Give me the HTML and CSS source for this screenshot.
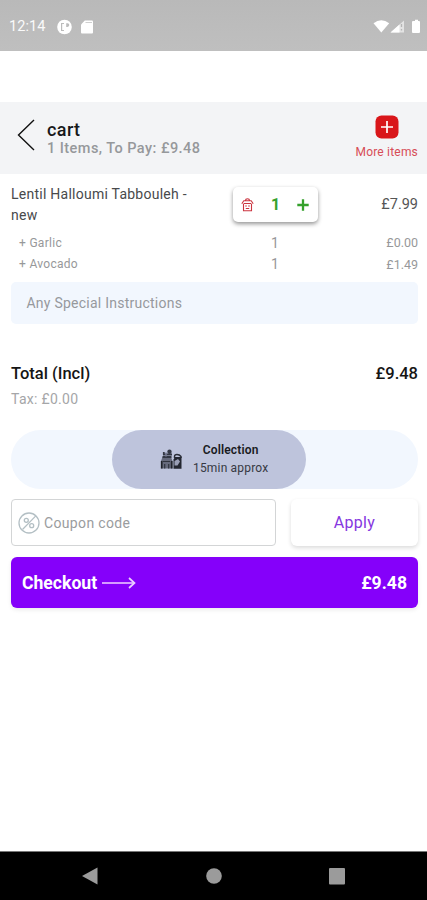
FILE: index.html
```html
<!DOCTYPE html>
<html lang="en">
<head>
<meta charset="utf-8">
<title>Cart</title>
<link rel="stylesheet" href="styles.css">
</head>
<body>
<div class="screen">
  <div class="status">
    <span class="clock">12:14</span>
    <svg class="app-badge" width="15" height="16" viewBox="0 0 15 16"><circle cx="7.5" cy="8" r="7.3" fill="#fff"/><path d="M7 4.500H4.600v7H7" fill="none" stroke="#bcbcbc" stroke-width="1.200"/><path d="M9.200 4.300h1.300a1.700 1.700 0 0 1 0 3.600H9.200z" fill="#bcbcbc"/></svg>
    <svg class="sd-card" width="12" height="14" viewBox="0 0 12 14"><path d="M3.8.5H11q1 0 1 1v11q0 1-1 1H1q-1 0-1-1V4.5z" fill="#fff"/><path d="M4.500 2.500h6.500" stroke="#cfcfcf" stroke-width="1"/></svg>
    <svg class="signals" width="48" height="16" viewBox="0 0 48 16"><path d="M.5 4.300Q8.300-1.800 16.200 4.300L8.300 13.600z" fill="#fff"/><path d="M31 1.500V13.500H17.500z" fill="#e3e3e3"/><path d="M26.500 5.500v8h-9z" fill="#fff"/><path d="M28.500 5v3m0 2v1.500" stroke="#b5b5b5" stroke-width="1.300"/><path d="M40 2h2V.7h3V2h1q1 0 1 1v10q0 1-1 1h-6q-1 0-1-1V3q0-1 1-1z" fill="#fff"/></svg>
  </div>

  <header class="header">
    <svg class="back" width="18" height="32" viewBox="0 0 18 32"><path d="M17 1L1.500 16L17 31" fill="none" stroke="#111" stroke-width="1.400"/></svg>
    <div class="heading">
      <div class="title">cart</div>
      <div class="summary">1 Items, To Pay: £9.48</div>
    </div>
    <div class="more">
      <svg width="24" height="24" viewBox="0 0 24 24"><rect x=".5" y=".5" width="23" height="23" rx="6" fill="#d9161a"/><path d="M12 6v12M6 12h12" stroke="#fff" stroke-width="1.700"/></svg>
      <span class="more-label">More items</span>
    </div>
  </header>

  <main class="cart">
    <div class="item">
      <div class="name">Lentil Halloumi Tabbouleh -<br>new</div>
      <div class="stepper">
        <svg width="13" height="14" viewBox="0 0 13 14"><path d="M.8 5.800l2-3h7.400l2 3M4.300 2.800q.2-2 2.200-2t2.200 2M2.600 5.500h7.800M2.500 6v6.800h8V6M5 7.300v1.400M8 7.300v1.400M4.800 10.500h3.400" fill="none" stroke="#cb3540" stroke-width="1.100"/></svg>
        <span class="qty">1</span>
        <svg width="12" height="12" viewBox="0 0 12 12"><path d="M6 .3v11.400M.3 6h11.400" stroke="#35a12c" stroke-width="2.300"/></svg>
      </div>
      <div class="price">£7.99</div>
    </div>
    <div class="extra"><span class="extra-name">+ Garlic</span><span class="extra-qty">1</span><span class="extra-price">£0.00</span></div>
    <div class="extra"><span class="extra-name">+ Avocado</span><span class="extra-qty">1</span><span class="extra-price">£1.49</span></div>
    <div class="note">Any Special Instructions</div>

    <div class="total"><span class="total-label">Total (Incl)</span><span class="total-price">£9.48</span></div>
    <div class="tax">Tax: £0.00</div>

    <div class="method">
      <div class="method-option">
        <svg width="23" height="21" viewBox="0 0 23 21"><path d="M2.500 8h8.500l1.500 4v7.500H1V12z" fill="#666a7c"/><path d="M3.800 6V3M3 5.500h9M2.500 8h9" stroke="#343844" stroke-width="1.800"/><circle cx="9.500" cy="2.800" r="2.200" fill="#343844"/><path d="M6 3.500v4" stroke="#787d94" stroke-width="1.500"/><path d="M1.700 12v7.500M11.700 12v7.500" stroke="#20232b" stroke-width="1.700"/><path d="M4.700 15v4.500M8.700 15v4.500M3 12.500h7" stroke="#30333d" stroke-width="1.200"/><path d="M13.500 10.500L15 8h6.500v11.800h-8z" fill="#232630"/><path d="M14.500 9V7.500q0-2 2.500-2t4 2V9" fill="none" stroke="#292c36" stroke-width="1.400"/><path d="M14.500 12l3.500-2 2 2.500-2.500 4h-3z" fill="#999eb5"/></svg>
        <div class="method-text"><div class="method-name">Collection</div><div class="method-time">15min approx</div></div>
      </div>
    </div>

    <div class="coupon-row">
      <div class="coupon">
        <svg width="22" height="22" viewBox="0 0 22 22" fill="none" stroke="#b3bfc4"><circle cx="11" cy="11" r="10" stroke-width="1.300"/><path d="M17.800 3.800L4.500 17.500" stroke-width="1.200"/><circle cx="8.300" cy="8.300" r="2" stroke-width="1.300"/><circle cx="13.700" cy="13.700" r="2" stroke-width="1.300"/></svg>
        <span class="coupon-label">Coupon code</span>
      </div>
      <div class="apply"><span class="apply-label">Apply</span></div>
    </div>

    <div class="checkout">
      <span class="checkout-label">Checkout</span>
      <svg width="34" height="14" viewBox="0 0 34 14"><path d="M0 7h32" stroke="#d59cff" stroke-width="2"/><path d="M27 2l5.500 5L27 12" fill="none" stroke="#eacfff" stroke-width="1.700"/></svg>
      <span class="checkout-price">£9.48</span>
    </div>
  </main>

  <nav class="nav">
    <svg width="16" height="18" viewBox="0 0 16 18"><path d="M0 9L15.500.500v17z" fill="#9b9b9b"/></svg>
    <svg width="16" height="16" viewBox="0 0 16 16"><circle cx="8" cy="8" r="7.800" fill="#9b9b9b"/></svg>
    <svg width="16" height="17" viewBox="0 0 16 17"><rect width="16" height="16.500" rx="1" fill="#9b9b9b"/></svg>
  </nav>
</div>
</body>
</html>
```
FILE: styles.css
```css
* { box-sizing: border-box; }
body { margin: 0; background: #fff; font-family: Roboto, "Liberation Sans", sans-serif; color: #222; }
svg { display: block; flex: none; }
span, .name, .title, .summary { white-space: nowrap; }
.screen { width: 427px; height: 900px; display: flex; flex-direction: column; overflow: hidden; }

.status { height: 51px; margin-bottom: 51px; padding: 2px 7px 0 9px; display: flex; align-items: center; flex: none; background: linear-gradient(#b9b9b9, #bfbfbf); }
.clock { width: 48px; font-size: 14.5px; letter-spacing: .1px; color: #fafafa; }
.sd-card { margin-left: 9px; }
.signals { margin-left: auto; margin-right: -1px; }

.header { height: 72px; flex: none; display: flex; align-items: center; padding: 0 9px 0 17px; background: #f3f4f6; }
.back { margin-top: -6px; }
.heading { margin: 1px 0 0 12px; }
.title { font-size: 18px; line-height: 19px; font-weight: 500; letter-spacing: .4px; color: #17181a; }
.summary { font-size: 14.5px; line-height: 19px; font-weight: 500; letter-spacing: .45px; color: #96989b; }
.more { margin-left: auto; display: flex; flex-direction: column; align-items: center; gap: 6px; padding-bottom: 2px; }
.more-label { font-size: 12px; line-height: 15px; letter-spacing: .2px; color: #d74d56; }

.cart { flex: 1; padding: 10px 9px 0 11px; }
.item { display: flex; height: 48px; }
.name { width: 222px; font-size: 14px; line-height: 20.5px; letter-spacing: .25px; color: #48494b; }
.stepper { width: 85px; height: 35px; margin-top: 3px; padding: 0 9px 0 8px; display: flex; align-items: center; justify-content: space-between; background: #fff; border-radius: 5px; box-shadow: 0 2px 4px rgba(0,0,0,.42); }
.qty { font-size: 16px; font-weight: 700; color: #35a12c; }
.price { margin: 12px 0 0 auto; font-size: 14.5px; line-height: 18px; color: #555; }
.extra { display: grid; grid-template-columns: 241px 30px 1fr; height: 21.5px; align-items: center; padding-left: 8px; font-size: 12.5px; color: #97989a; }
.extra-name { font-size: 12px; letter-spacing: .3px; }
.extra-qty { text-align: center; font-size: 14px; }
.extra-price { text-align: right; }
.note { height: 42px; margin: 7px 0 0; padding-left: 15.5px; padding-bottom: 1px; display: flex; align-items: center; background: #f2f7fe; border-radius: 5px; font-size: 14px; letter-spacing: .24px; color: #96999d; }
.total { margin-top: 40px; display: flex; justify-content: space-between; font-size: 16.5px; line-height: 20px; font-weight: 500; color: #151515; }
.tax { margin-top: 6px; font-size: 14px; line-height: 18px; letter-spacing: .3px; color: #a5a6a8; }
.method { height: 59px; margin-top: 22px; display: flex; justify-content: center; background: #f2f7fe; border-radius: 30px; }
.method-option { width: 194px; margin-right: 11px; display: flex; align-items: center; padding-left: 48px; gap: 10px; background: #bec4dc; border-radius: 30px; }
.method-text { padding-bottom: 1px; text-align: center; white-space: nowrap; font-size: 12px; line-height: 18px; letter-spacing: .18px; }
.method-name { font-weight: 600; color: #191b22; }
.method-time { color: #363943; }
.coupon-row { display: grid; grid-template-columns: 265px 1fr; column-gap: 15px; height: 47px; margin-top: 10px; }
.coupon { display: flex; align-items: center; gap: 4px; padding-left: 6px; border: 1px solid #d3d5d6; border-radius: 4px; font-size: 14px; letter-spacing: .35px; color: #9a9c9e; }
.apply { display: flex; align-items: center; justify-content: center; border-radius: 6px; box-shadow: 0 2px 4px rgba(0,0,0,.14); font-size: 16px; letter-spacing: .3px; color: #8637e0; }
.checkout { height: 51px; margin-top: 11px; padding: 0 11px; display: flex; align-items: center; gap: 5px; background: #8500fa; border-radius: 6px; box-shadow: 0 2px 4px rgba(0,0,0,.08); font-size: 17.6px; font-weight: 700; color: #fff; }
.checkout-price { margin-left: auto; }

.nav { height: 49px; flex: none; padding: 0 82px 0 82px; display: flex; align-items: center; justify-content: space-between; background: #000; border-top: 1px solid #777; }
```
